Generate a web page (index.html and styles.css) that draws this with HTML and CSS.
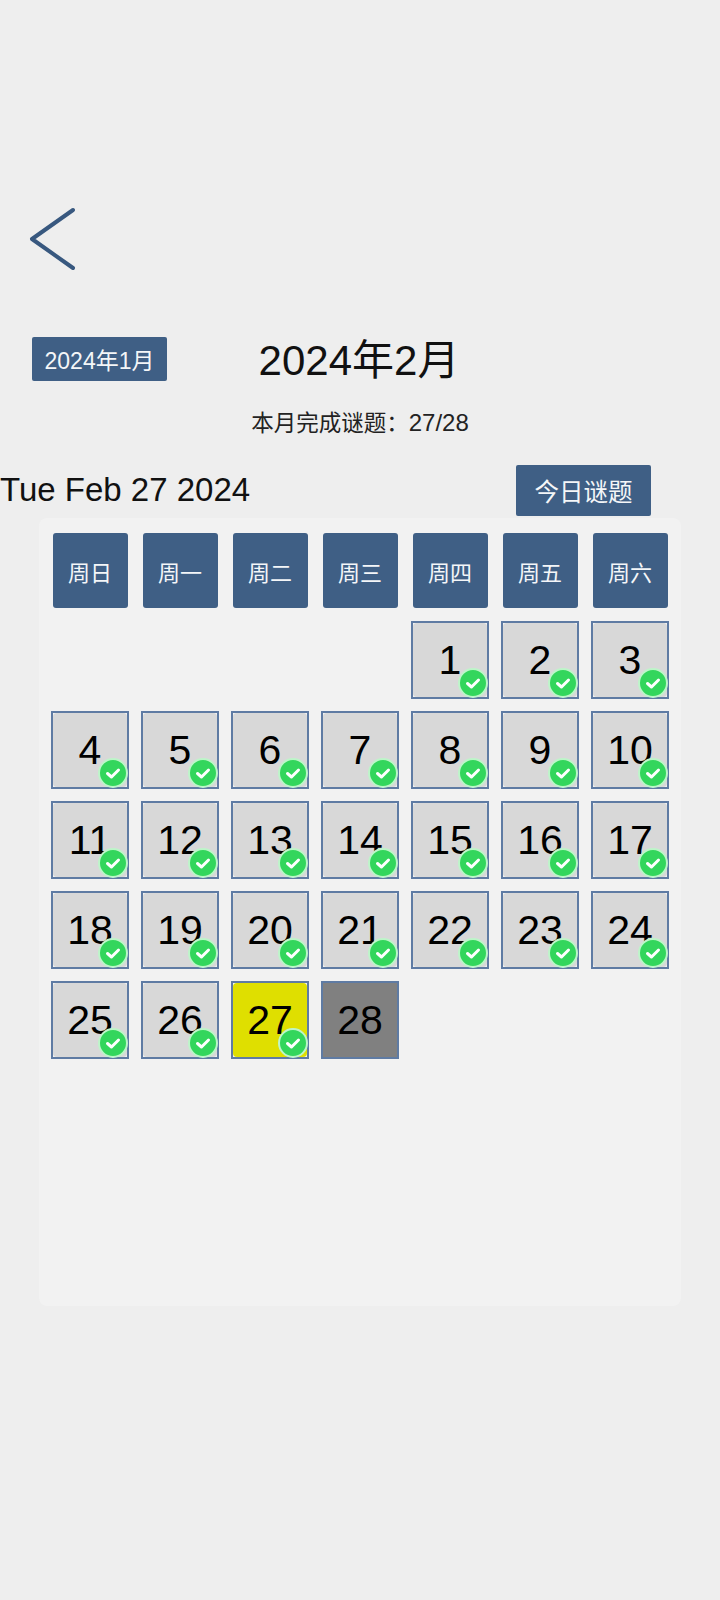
FILE: index.html
```html
<!doctype html>
<html lang="zh">
<head>
<meta charset="UTF-8">
<title>每日谜题</title>
<link rel="stylesheet" href="styles.css">
</head>
<body>
<div class="back">
  <svg width="48" height="64" viewBox="0 0 48 64"><path d="M44 3 L3 32 L44 61" fill="none" stroke="#38587f" stroke-width="4" stroke-linecap="round" stroke-linejoin="round"/></svg>
</div>

<div class="month-row">
  <div class="month-prev"><button class="btn btn-prev">2024年1月</button></div>
  <h1>2024年2月</h1>
</div>
<p class="progress">本月完成谜题：<span class="count">27/28</span></p>

<div class="date-row">
  <span class="today-text">Tue Feb 27 2024</span>
  <button class="btn btn-today">今日谜题</button>
</div>

<div class="panel">
  <div class="grid week">
    <div class="wd">周日</div><div class="wd">周一</div><div class="wd">周二</div><div class="wd">周三</div><div class="wd">周四</div><div class="wd">周五</div><div class="wd">周六</div>
  </div>
  <div class="grid" id="days"></div>
</div>

<script>
let days = document.getElementById('days')
let check = '<svg class="badge" viewBox="0 0 30 30"><circle cx="15" cy="15" r="14" fill="#33d65c" stroke="#bdf5c9" stroke-width="2"/><path d="M9.5 15.5 L13.5 19 L20.5 12" fill="none" stroke="#fff" stroke-width="3" stroke-linecap="round" stroke-linejoin="round"/></svg>'
for (let i = 0; i < 4; i++) {
    days.appendChild(document.createElement('div'))
}
for (let d = 1; d <= 28; d++) {
    let cell = document.createElement('div')
    cell.className = 'day'
    if (d == 27)
        cell.className += ' today'
    if (d == 28)
        cell.className += ' future'
    cell.innerHTML = '<span class="fill">' + d + '</span>' + (d < 28 ? check : '')
    days.appendChild(cell)
}
</script>
</body>
</html>
```

FILE: styles.css
```css
body {
  margin: 0;
  height: 1600px;
  background: #eeeeee;
  font-family: "Liberation Sans", "Noto Sans CJK SC", sans-serif;
  color: #111;
  overflow: hidden;
}
.back {
  padding: 207px 0 0 29px;
  height: 64px;
}
.back svg {
  display: block;
}
.month-row {
  display: grid;
  grid-template-columns: 1fr auto 1fr;
  align-items: center;
  width: 718px;
  margin-top: 66px;
  height: 44px;
}
.month-prev {
  padding-left: 32px;
}
h1 {
  margin: 0 0 -2px;
  padding-top: 2px;
  font-size: 42px;
  font-weight: normal;
  line-height: 44px;
}
.progress {
  margin: 28px 0 0;
  width: 720px;
  text-align: center;
  font-size: 22.5px;
  line-height: 28px;
  color: #222;
}
.count {
  font-size: 24px;
}
.date-row {
  display: flex;
  align-items: center;
  justify-content: space-between;
  margin-top: 27px;
  padding-right: 69px;
  height: 51px;
}
.today-text {
  padding-bottom: 2px;
  font-size: 33px;
}
.btn {
  border: 0;
  border-radius: 2px;
  background: #3f5f85;
  color: #f4f6f8;
  font-family: inherit;
  padding: 0;
  width: 135px;
}
.btn-prev {
  display: block;
  height: 44px;
  font-size: 23px;
}
.btn-today {
  height: 51px;
  font-size: 24.5px;
}
.panel {
  box-sizing: border-box;
  width: 642px;
  height: 788px;
  margin: 2px 0 0 39px;
  padding: 15px 0 0 12px;
  background: #f2f2f2;
  border-radius: 8px;
}
.grid {
  display: grid;
  grid-template-columns: repeat(7, 78px);
  grid-auto-rows: 78px;
  gap: 12px;
}
.week {
  grid-auto-rows: 75px;
  margin-bottom: 13px;
}
.wd {
  justify-self: center;
  width: 75px;
  display: flex;
  align-items: center;
  justify-content: center;
  background: #3f5f85;
  color: #f4f6f8;
  font-size: 22px;
  border-radius: 3px;
}
.day {
  position: relative;
  box-sizing: border-box;
  border: 2px solid #5f7ba3;
  background: #f2f2f2;
}
.fill {
  display: flex;
  align-items: center;
  justify-content: center;
  height: 100%;
  background: #d8d8d8;
  border-radius: 4px;
  font-size: 41px;
  color: #000;
}
.today .fill {
  background: #dfdf00;
}
.future .fill {
  background: #808080;
  border-radius: 0;
}
.badge {
  position: absolute;
  right: -0.5px;
  bottom: -1px;
  width: 30px;
  height: 30px;
}
```
